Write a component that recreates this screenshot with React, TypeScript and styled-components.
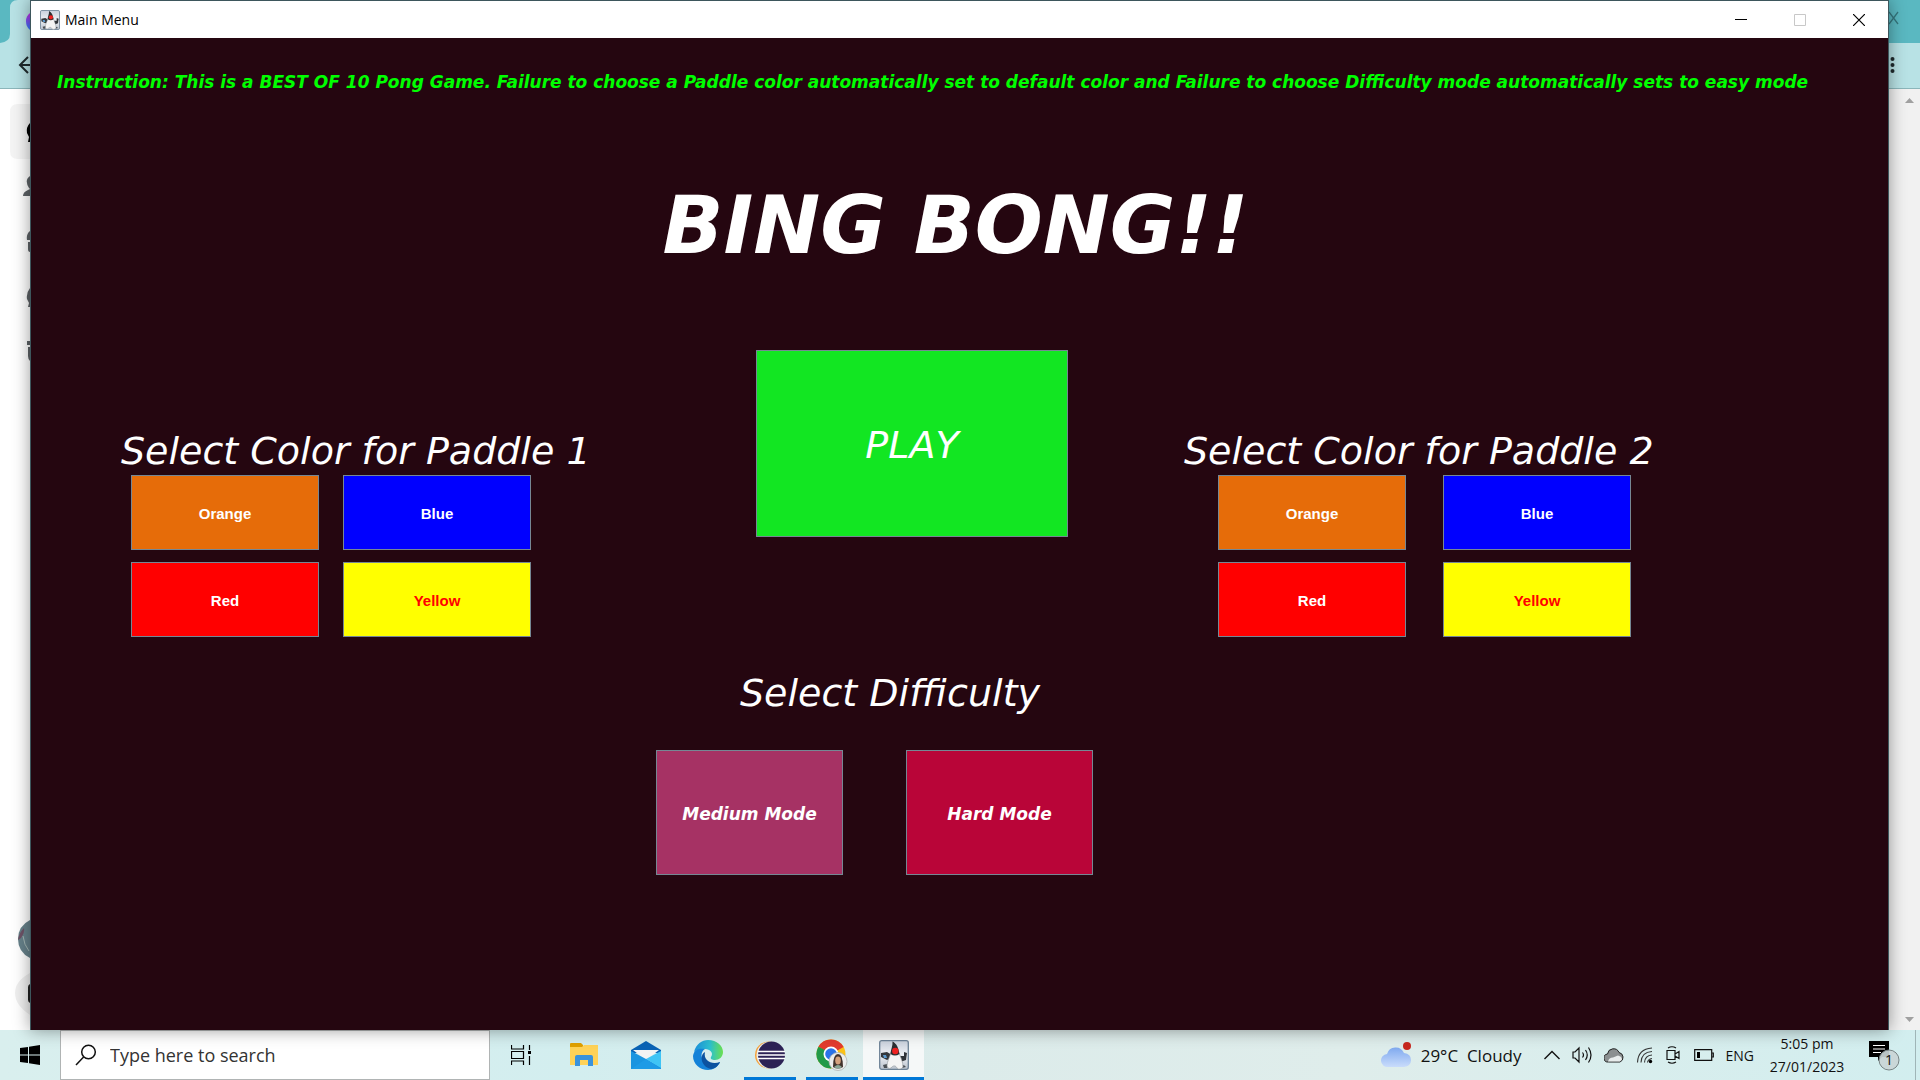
import React from "react";
import styled, { createGlobalStyle } from "styled-components";

const hand = `"Ink Free", "DejaVu Sans", sans-serif`;
const ui = `"Segoe UI", "Open Sans", "Noto Sans", sans-serif`;
const ink = "#250610";

const GlobalStyle = createGlobalStyle`
  *, *::before, *::after { box-sizing: border-box; }
  html, body, #root { height: 100%; }
  body { margin: 0; overflow: hidden; background: #fff; font-family: ${ui}; }
  button { font: inherit; padding: 0; margin: 0; border: 0; background: none; color: inherit; }
  svg { display: block; flex: none; }
`;

const Desktop = styled.div`
  display: flex;
  flex-direction: column;
  height: 100vh;
`;

const Stage = styled.div`
  display: grid;
  grid-template-columns: 30px minmax(0, 1fr) 31px;
  flex: 1;
  min-height: 0;
`;

const BrowserLeft = styled.aside`
  display: flex;
  flex-direction: column;
  overflow: hidden;
  background: #fff;
`;

const BrowserRight = styled(BrowserLeft)`
  background: #f1f1f1;
`;

const Edge = styled.svg`
  width: 100%;
`;

const Spacer = styled.div`
  flex: 1;
`;

const Window = styled.main`
  display: flex;
  flex-direction: column;
  border: 1px solid #3d565c;
  border-bottom: 0;
  background: ${ink};
  box-shadow: 0 0 16px rgba(0, 0, 0, 0.4);
  color: #fff;
  font-variant-ligatures: none;
  z-index: 1;
`;

const TitleBar = styled.header`
  display: flex;
  align-items: center;
  height: 37px;
  padding-left: 9px;
  background: #fff;
  color: #000;
  font-size: 14px;
`;

const WindowName = styled.span`
  flex: 1;
  padding-left: 5px;
`;

const WindowButton = styled.button`
  display: flex;
  align-items: center;
  justify-content: center;
  width: 59px;
  height: 37px;
`;

const Instruction = styled.p`
  margin: 30px 0 0 26px;
  font: italic 700 17px/28px ${hand};
  color: #00ff00;
  white-space: nowrap;
`;

const Title = styled.h1`
  margin: 80px 0 0;
  padding-right: 8px;
  font: italic 700 80px/100px ${hand};
  text-align: center;
`;

const Board = styled.div`
  display: grid;
  grid-template-columns: 635fr 428fr 704fr;
  align-items: start;
  margin-top: 74px;
  padding-left: 90px;
`;

const Heading = styled.h2`
  margin: 0;
  font: italic 400 38px/44px ${hand};
  white-space: nowrap;
`;

const PaddleSection = styled.section`
  padding-top: 79px;
`;

const Swatches = styled.div<{ $indent: number; $gap: number }>`
  display: grid;
  grid-template-columns: repeat(2, 188px);
  gap: 12px ${(p) => p.$gap}px;
  margin-top: 2px;
  padding-left: ${(p) => p.$indent}px;
`;

const GameButton = styled.button<{ $bg: string; $fg?: string }>`
  border: 1px solid #768794;
  background: ${(p) => p.$bg};
  color: ${(p) => p.$fg ?? "#fff"};
`;

const SwatchButton = styled(GameButton)`
  height: 75px;
  padding-top: 2px;
  font: 700 15px/20px Arial, "Liberation Sans", sans-serif;
`;

const PlayButton = styled(GameButton)`
  width: 312px;
  height: 187px;
  padding-top: 2px;
  font: italic 400 38px/44px ${hand};
`;

const ModeButton = styled(GameButton)`
  width: 187px;
  height: 125px;
  padding-top: 2px;
  font: italic 700 17px/28px ${hand};
`;

const Difficulty = styled.section`
  display: grid;
  grid-template-columns: 625fr 1232fr;
  margin-top: 34px;
`;

const DifficultyBody = styled.div`
  grid-column: 2;
`;

const DifficultyHeading = styled(Heading)`
  padding-left: 84px;
`;

const Modes = styled.div`
  display: flex;
  gap: 63px;
  margin-top: 35px;
`;

const Taskbar = styled.footer`
  display: flex;
  height: 50px;
  background: linear-gradient(90deg, #d9efee, #d3eeef 30%, #dcebea 50%, #dfedeb 70%, #d2eeef);
  color: #111;
`;

const StartButton = styled.button`
  display: flex;
  align-items: center;
  justify-content: center;
  width: 60px;
`;

const Search = styled.label`
  display: flex;
  align-items: center;
  gap: 13px;
  width: 430px;
  padding-left: 14px;
  border: 1px solid #b0b4b4;
  background: #fff;
`;

const SearchInput = styled.input`
  flex: 1;
  min-width: 0;
  border: 0;
  padding: 0;
  outline: 0;
  background: none;
  font: 18px/24px ${ui};
  &::placeholder { color: #333; opacity: 1; }
`;

const Apps = styled.nav`
  display: flex;
  align-items: stretch;
  flex: 1;
  padding-left: 1px;
`;

const AppButton = styled.button`
  display: flex;
  align-items: center;
  justify-content: center;
  width: 62px;
`;

const OpenApp = styled(AppButton)`
  width: 52px;
  margin: 0 5px;
  padding-top: 3px;
  border-bottom: 3px solid #0078d7;
`;

const ActiveApp = styled(OpenApp)`
  width: 61px;
  margin: 0;
  background: #f5f8f8;
`;

const Tray = styled.div`
  display: flex;
  align-items: center;
  font-size: 14px;
`;

const Weather = styled.button`
  display: flex;
  align-items: center;
  gap: 9px;
  margin-right: 22px;
  font-size: 17px;
  white-space: pre;
`;

const TrayIcons = styled.div`
  display: flex;
  align-items: center;
  gap: 12px;
  margin-right: 12px;
`;

const Clock = styled.time`
  width: 76px;
  margin: 0 24px 0 15px;
  font-size: 14px;
  line-height: 23px;
  text-align: center;
`;

const Notices = styled.button`
  width: 32px;
  margin-right: 14px;
`;

const ShowDesktop = styled.button`
  align-self: stretch;
  width: 5px;
  border-left: 1px solid #9fb5b7;
`;

function Duke({ size }: { size: number }) {
  return (
    <svg width={size} height={size} viewBox="0 0 30 30">
      <defs>
        <linearGradient id="dk" x1="0" y1="0" x2="0" y2="1">
          <stop offset="0" stopColor="#c9d0dc" />
          <stop offset=".5" stopColor="#eef1f5" />
          <stop offset="1" stopColor="#b9c1cc" />
        </linearGradient>
      </defs>
      <rect x=".7" y=".7" width="28.6" height="28.6" rx="2" fill="url(#dk)" stroke="#6d8296" strokeWidth="1.3" />
      <path d="M2 13l6-1 5 3 1 3-4 1-2 1-6-3z" fill="#34383d" />
      <path d="M4 15l3 0 1 3-3 0z" fill="#5b9bd0" />
      <path d="M19 16l6 0 0-4 3 1-1 7-6 2z" fill="#2f3338" />
      <path d="M4 25q3-1 6-1l-2 4H5zM23 25q3 0 4 2l-4 1z" fill="#4a4f54" />
      <path d="M12 12c-1 5-4 9-4 14 1 3 3 3 5 1s4-1 5 1 5 1 6-1c0-5-2-9-4-14z" fill="#f4f4f4" stroke="#8b9297" strokeWidth=".6" />
      <path d="M13.500 1.500c4 2 6 6 7 12.500-3 2-6 2-9 0 0-4 2.500-8 2-12.500z" fill="#2b2e31" />
      <circle cx="16.300" cy="11" r="3.200" fill="#ee2020" />
    </svg>
  );
}

function LeftTop() {
  return (
    <Edge height="400" viewBox="0 0 30 400">
      <defs>
        <linearGradient id="msg" x1="0" y1="0" x2="0" y2="1">
          <stop offset="0" stopColor="#c22ce8" />
          <stop offset="1" stopColor="#2a7cff" />
        </linearGradient>
      </defs>
      <rect width="30" height="88" fill="#b8e2e5" />
      <path d="M0 0h18q-8 0-8 8v26q0 8-10 9z" fill="#5ab8c1" />
      <path d="M30 13q-4 3-4 8 0 6 4 9z" fill="url(#msg)" />
      <path d="M30 65H20M28 57l-8 8 8 8" fill="none" stroke="#1f2a2d" strokeWidth="2" />
      <path d="M0 88.500h30" stroke="#8bb6ba" />
      <path d="M30 104H18q-8 0-8 8v39q0 8 8 8h12z" fill="#f4f4f4" />
      <path d="M30 123q-4 4-3 10l2 4-1 5h2z" fill="#000" />
      <path d="M30 176q-6 4-1 12l1 1-2 1q-5 2-5 6h7zM30 231q-4 3-3 9h3zM28 242h2v10q-2 0-2-3zM30 288q-4 5-3 11l2 4-1 4h2zM27 341h3v4h-3zM28 347h2v14q-2-2-2-5z" fill="#5d6266" />
    </Edge>
  );
}

function LeftBottom() {
  return (
    <Edge height="130" viewBox="0 0 30 130">
      <path d="M30 20q-12 6-12 19t12 19z" fill="#66818a" />
      <path d="M24 28q-5 5-6 12l3-2q4-6 3-10z" fill="#6e5266" />
      <path d="M23 36q1 9 6 15" stroke="#a5b8b5" fill="none" />
      <path d="M30 73q-15 8-15 20t15 22z" fill="#efefef" />
      <path d="M30 84q-2 1-2 3v13q0 2 2 3z" fill="#222" />
    </Edge>
  );
}

function RightTop() {
  return (
    <Edge height="110" viewBox="0 0 31 110" preserveAspectRatio="none">
      <rect width="31" height="43" fill="#5ab8c1" />
      <rect y="43" width="31" height="45" fill="#b8e2e5" />
      <path d="M0 12l9 12M0 24l9-12" stroke="#35767d" strokeWidth="1.300" />
      <g fill="#1f2a2d">
        <circle cx="3.500" cy="59" r="2" />
        <circle cx="3.500" cy="65" r="2" />
        <circle cx="3.500" cy="71" r="2" />
      </g>
      <path d="M0 88.500h31" stroke="#8bb6ba" />
      <path d="M16 103l4.500-5 4.500 5z" fill="#a0a0a0" />
    </Edge>
  );
}

function PaddlePicker({ player, indent, gap }: { player: number; indent: number; gap: number }) {
  return (
    <PaddleSection>
      <Heading>Select Color for Paddle {player}</Heading>
      <Swatches $indent={indent} $gap={gap}>
        <SwatchButton $bg="#e66c09">Orange</SwatchButton>
        <SwatchButton $bg="#0000ff">Blue</SwatchButton>
        <SwatchButton $bg="#ff0000">Red</SwatchButton>
        <SwatchButton $bg="#ffff00" $fg="#ff0000">Yellow</SwatchButton>
      </Swatches>
    </PaddleSection>
  );
}

export default function App() {
  return (
    <Desktop>
      <GlobalStyle />
      <Stage>
        <BrowserLeft>
          <LeftTop />
          <Spacer />
          <LeftBottom />
        </BrowserLeft>
        <Window>
          <TitleBar>
            <Duke size={20} />
            <WindowName>Main Menu</WindowName>
            <WindowButton aria-label="Minimize">
              <svg width="12" height="12" viewBox="0 0 12 12"><path d="M0 5.500h12" stroke="#000" /></svg>
            </WindowButton>
            <WindowButton aria-label="Maximize" disabled>
              <svg width="12" height="12" viewBox="0 0 12 12"><path d="M.5.5h11v11H.5z" fill="none" stroke="#c8c8c8" /></svg>
            </WindowButton>
            <WindowButton aria-label="Close">
              <svg width="12" height="12" viewBox="0 0 12 12"><path d="M0 0l12 12M12 0L0 12" stroke="#000" strokeWidth="1.200" /></svg>
            </WindowButton>
          </TitleBar>
          <Instruction>
            Instruction: This is a BEST OF 10 Pong Game. Failure to choose a Paddle color automatically set to default color and Failure to choose Difficulty mode automatically sets to easy mode
          </Instruction>
          <Title>BING BONG!!</Title>
          <Board>
            <PaddlePicker player={1} indent={10} gap={24} />
            <PlayButton $bg="#12e622">PLAY</PlayButton>
            <PaddlePicker player={2} indent={34} gap={37} />
          </Board>
          <Difficulty>
            <DifficultyBody>
              <DifficultyHeading>Select Difficulty</DifficultyHeading>
              <Modes>
                <ModeButton $bg="#a63264">Medium Mode</ModeButton>
                <ModeButton $bg="#b90538">Hard Mode</ModeButton>
              </Modes>
            </DifficultyBody>
          </Difficulty>
        </Window>
        <BrowserRight>
          <RightTop />
          <Spacer />
          <Edge height="20" viewBox="0 0 31 20"><path d="M16 7h9l-4.500 5z" fill="#a0a0a0" /></Edge>
        </BrowserRight>
      </Stage>
      <Taskbar>
        <StartButton aria-label="Start">
          <svg width="20" height="20" viewBox="0 0 20 20"><path d="M0 3l8-1v7.500H0zM9 1.800L20 0v9.500H9zM0 10.500h8V18l-8-1zM9 10.500h11V20L9 18.200z" fill="#000" /></svg>
        </StartButton>
        <Search>
          <svg width="22" height="22" viewBox="0 0 22 22"><g fill="none" stroke="#111" strokeWidth="1.500"><circle cx="13.500" cy="8" r="6.800" /><path d="M8.600 13L1 21" /></g></svg>
          <SearchInput aria-label="Search" placeholder="Type here to search" />
        </Search>
        <Apps>
          <AppButton aria-label="Task View">
            <svg width="22" height="20" viewBox="0 0 22 20"><path d="M.5 0v4h12V0M.5 20v-4h12v4M.5 6.500h12v7H.5zM18.500 0v5M18.500 11v9" fill="none" stroke="#000" strokeWidth="1.200" /><path d="M17 6h3v3h-3z" /></svg>
          </AppButton>
          <AppButton aria-label="File Explorer">
            <svg width="28" height="24" viewBox="0 0 28 24"><path d="M0 1q0-1 1-1h10l2 2v4H0z" fill="#e0a000" /><path d="M0 4h12l2-2h14v20H0z" fill="#ffd257" /><path d="M5 23v-9q0-2 2-2h14q2 0 2 2v9h-5v-6h-8v6z" fill="#3a93dc" /></svg>
          </AppButton>
          <AppButton aria-label="Mail">
            <svg width="30" height="28" viewBox="0 0 30 28"><path d="M0 9L15 0l15 9v3H0z" fill="#0a63b5" /><path d="M2 9h26L15 19z" fill="#f3f3f3" /><path d="M0 10l30 16V28H0z" fill="#1b95e0" /><path d="M30 10v17L15 18z" fill="#3fc4f5" /><path d="M0 28l15-10 15 10z" fill="#1e9be6" /></svg>
          </AppButton>
          <AppButton aria-label="Edge">
            <svg width="30" height="30" viewBox="0 0 30 30">
              <defs>
                <linearGradient id="eg"><stop offset="0" stopColor="#1b8fdc" /><stop offset=".55" stopColor="#2cc0d0" /><stop offset="1" stopColor="#6be04e" /></linearGradient>
              </defs>
              <path d="M1 12C3 4 9 0 15 0c9 0 15 6 15 12 0 5-4 8-8 8-3 0-5-1-4-3 3-4-1-8-6-8S3 10 1 12z" fill="url(#eg)" />
              <path d="M0 16C1 9 7 8 12 9c-4 2-6 10 2 14 5 3 10 1 13-1-2 5-7 8-12 8C7 30 0 24 0 16z" fill="#1482d8" />
              <path d="M12 12c-6 3-4 15 6 17 4 0 8-4 9-7-8 3-17-1-15-10z" fill="#0c53a0" />
            </svg>
          </AppButton>
          <OpenApp aria-label="Eclipse">
            <svg width="30" height="28" viewBox="0 0 30 28"><circle cx="13.500" cy="14" r="13.500" fill="#f7a23b" /><circle cx="15" cy="14" r="13.500" fill="#e6eef0" /><circle cx="16.500" cy="14" r="13.500" fill="#2c2255" /><path d="M3 10.500h27M3 14h27M3 17.500h27" stroke="#fff" strokeWidth="1.500" /></svg>
          </OpenApp>
          <OpenApp aria-label="Chrome">
            <svg width="32" height="32" viewBox="0 0 32 32">
              <circle cx="15" cy="15" r="14.500" fill="#fbc116" />
              <path d="M15 15L2.400 7.700A14.500 14.500 0 0 1 27.600 8z" fill="#e33b2e" />
              <path d="M2.400 7.700A14.500 14.500 0 0 0 15 29.500l7-12z" fill="#229a48" />
              <circle cx="15" cy="15" r="7.500" fill="#fff" /><circle cx="15" cy="15" r="5.800" fill="#2a73e8" />
              <circle cx="22" cy="22.500" r="9" fill="#eceeed" stroke="#aeb4b4" strokeWidth=".8" />
              <path d="M17 28q0-13 5-13t5 13q-5 3-10 0z" fill="#42332c" /><ellipse cx="22" cy="21.500" rx="2.800" ry="4" fill="#d5a27e" /><path d="M18 28q4-4 8 0-4 3-8 0z" fill="#8aa797" />
            </svg>
          </OpenApp>
          <ActiveApp aria-label="Main Menu"><Duke size={30} /></ActiveApp>
        </Apps>
        <Tray>
          <Weather>
            <svg width="31" height="26" viewBox="0 0 31 26">
              <defs><linearGradient id="cl" x1="0" y1="0" x2="0" y2="1"><stop offset="0" stopColor="#7fa9ef" /><stop offset="1" stopColor="#c9dcfb" /></linearGradient></defs>
              <path d="M7 25a6.500 6.500 0 0 1-1-13 9 9 0 0 1 17-1q7 1 7 7t-7 7z" fill="url(#cl)" />
              <circle cx="26" cy="4" r="4" fill="#c8281e" />
            </svg>
            {"29°C  Cloudy"}
          </Weather>
          <TrayIcons>
            <svg width="16" height="10" viewBox="0 0 16 10"><path d="M.5 9L8 1.500 15.500 9" fill="none" stroke="#111" strokeWidth="1.400" /></svg>
            <svg width="20" height="18" viewBox="0 0 20 18"><path d="M1 6h2l4-4v14l-4-4H1zM10.500 6.500q2 2.500 0 5M13.500 4q3.500 5 0 10M16.500 1.500q5 7.500 0 15" fill="none" stroke="#111" strokeWidth="1.200" /></svg>
            <svg width="20" height="15" viewBox="0 0 20 15"><path d="M4.500 14a4 4 0 0 1-1-8A6 6 0 0 1 15 4.500a5 5 0 0 1 1 9.500z" fill="#8b8f90" stroke="#222" /><path d="M4 13.500q1-4 5-4l5-2q4 1 4 4l-2 2z" fill="#e8ecec" /></svg>
            <svg width="18" height="18" viewBox="0 0 18 18"><g fill="none" stroke="#333" strokeWidth="1.100"><path d="M1.500 16.500Q2 3 16 2M5 16.500Q5.500 6 16 5.500M8.500 16.500Q9 9.500 16 9M11.500 16.500q.5-3.500 4.500-4" /></g><circle cx="14.500" cy="15.500" r="1.700" /></svg>
            <svg width="16" height="18" viewBox="0 0 16 18"><path d="M1 4.500h8v9H1zM9 8l4-2.500v7L9 10M2 2q4-2.500 8 0M2 16q4 2.500 8 0" fill="none" stroke="#111" strokeWidth="1.200" /></svg>
            <svg width="20" height="12" viewBox="0 0 20 12"><path d="M.7.700h17v10.600H.7zM18 4h1.300v4H18" fill="none" stroke="#111" strokeWidth="1.200" /><path d="M3 3h3v6H3z" /></svg>
          </TrayIcons>
          ENG
          <Clock>5:05 pm<br />27/01/2023</Clock>
          <Notices aria-label="1 notification">
            <svg width="32" height="32" viewBox="0 0 32 32">
              <path d="M0 2h20v16h-7l-4 4v-4H0z" fill="#000" />
              <path d="M4 6.500h12M4 10h12M4 13.500h8" stroke="#fff" />
              <circle cx="20" cy="21" r="10" fill="#c9d5d6" fillOpacity=".92" stroke="#788485" />
              <text x="20" y="26" textAnchor="middle" fontSize="14" fill="#111">1</text>
            </svg>
          </Notices>
          <ShowDesktop aria-label="Show desktop" />
        </Tray>
      </Taskbar>
    </Desktop>
  );
}
